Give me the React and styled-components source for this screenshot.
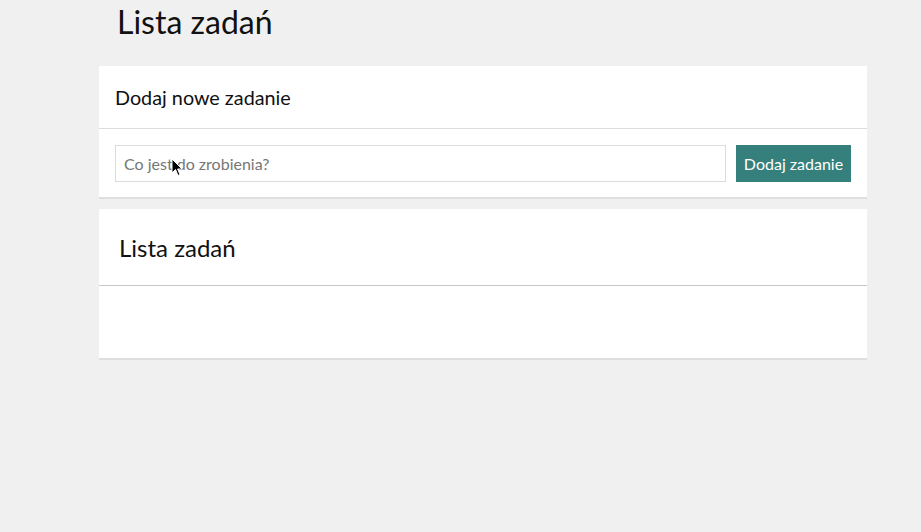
import React from "react";
import styled, { createGlobalStyle } from "styled-components";

const Global = createGlobalStyle`
  html, body { margin: 0; padding: 0; background: #f0f0f0; }
  body { font-family: Lato, "Open Sans", sans-serif; color: #111; }
  * { box-sizing: border-box; }
`;

const Page = styled.div`
  position: relative;
  min-height: 532px;
  padding: 0 54px 0 99px;
`;

const Main = styled.main`
  width: 768px;
  display: flex;
  flex-direction: column;
  gap: 10px;
`;

const Title = styled.h1`
  margin: 0;
  padding: 2px 0 0 18px;
  height: 56px;
  font-size: 32px;
  font-weight: 400;
  line-height: 40px;
  color: #111;
`;

const Card = styled.section`
  background: #fff;
  border-bottom: 2px solid #dedede;
`;

const CardHeader = styled.header`
  display: flex;
  align-items: center;
  height: ${(p) => p.$h}px;
  padding-left: ${(p) => p.$pl}px;
  border-bottom: 1px solid ${(p) => p.$line};
`;

const CardTitle = styled.h2`
  margin: 0;
  font-size: ${(p) => p.$size}px;
  font-weight: 400;
  color: #111;
`;

const Form = styled.form`
  display: flex;
  gap: 10px;
  padding: 16px 16px 15px 16px;
`;

const Input = styled.input`
  flex: 1;
  height: 37px;
  border: 1px solid #dcdcdc;
  padding: 0 8px;
  font-family: Lato, sans-serif;
  font-size: 16px;
  color: #333;
  outline: none;
  &::placeholder { color: #767676; }
`;

const Button = styled.button`
  height: 37px;
  width: 115px;
  border: none;
  background: #35807c;
  color: #fff;
  font-family: Lato, sans-serif;
  font-size: 16px;
  padding: 0;
`;

const ListBody = styled.div`
  height: 72px;
`;

const Cursor = styled.svg`
  position: absolute;
  left: 171px;
  top: 158px;
  pointer-events: none;
`;

export default function App() {
  return (
    <Page>
      <Global />
      <Main>
        <Title>Lista zadań</Title>
        <Card>
          <CardHeader $h={63} $pl={16} $line="#dddddd">
            <CardTitle $size={19.8}>Dodaj nowe zadanie</CardTitle>
          </CardHeader>
          <Form onSubmit={(e) => e.preventDefault()}>
            <Input placeholder="Co jest do zrobienia?" />
            <Button type="submit">Dodaj zadanie</Button>
          </Form>
        </Card>
        <Card>
          <CardHeader $h={77} $pl={20} $line="#c8c8c8">
            <CardTitle $size={24}>Lista zadań</CardTitle>
          </CardHeader>
          <ListBody />
        </Card>
      </Main>
      <Cursor width="12" height="19" viewBox="0 0 12 19">
        <path d="M1 1 L1 15 L4.5 11.5 L7 17.5 L9 16.6 L6.6 11 L11 11 Z" fill="#000" stroke="#fff" strokeWidth="1" />
      </Cursor>
    </Page>
  );
}
